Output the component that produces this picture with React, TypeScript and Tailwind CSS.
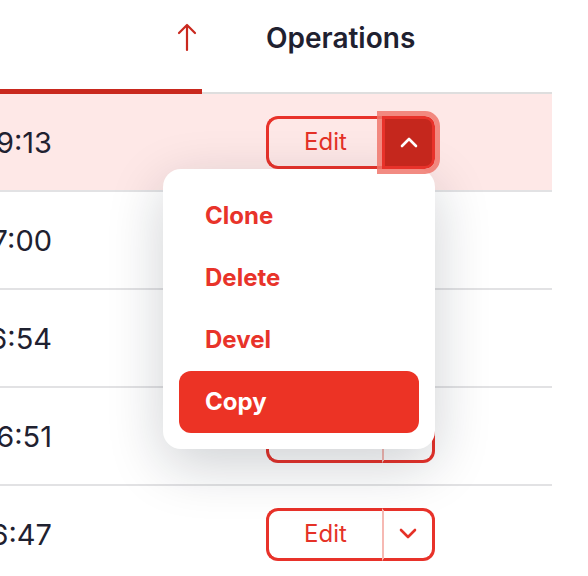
import React from "react";

// Table rows — the real page is scrolled sideways, so only the tail of the time is visible.
const rows = [
  { time: "2024-05-14 10:49:13", open: true },
  { time: "2024-05-14 10:47:00", open: false },
  { time: "2024-05-14 10:46:54", open: false },
  { time: "2024-05-14 10:46:51", open: false },
  { time: "2024-05-14 10:46:47", open: false },
];

const menuItems = ["Clone", "Delete", "Devel", "Copy"];

function ChevronIcon({ up, className }: { up?: boolean; className?: string }) {
  return (
    <svg width="20" height="12" viewBox="0 0 20 12" fill="none" className={className} aria-hidden="true">
      <path
        d={up ? "M3 10 L10 3 L17 10" : "M3 2 L10 9 L17 2"}
        stroke="currentColor"
        strokeWidth="2.6"
        strokeLinecap="round"
        strokeLinejoin="round"
      />
    </svg>
  );
}

function SortArrow() {
  return (
    <svg width="22" height="30" viewBox="0 0 22 30" fill="none" aria-hidden="true">
      <path d="M11 3 V28 M3 11 L11 3 L19 11" stroke="#c9281e" strokeWidth="2.2" strokeLinecap="round" strokeLinejoin="round" />
    </svg>
  );
}

function SplitButton({ open }: { open: boolean }) {
  return (
    <div className="relative flex h-[53px] w-[169px]">
      <button className="flex h-full w-[116px] items-center justify-center rounded-l-[12px] border-[3px] border-r-0 border-[#e8322a] text-[24px] text-[#e53127]">
        Edit
      </button>
      {open ? (
        <button className="relative z-20 flex h-full flex-1 items-center justify-center rounded-r-[10px] border-[3px] border-[#e8322a] bg-[#c5271d] text-white outline-[5px] outline-solid outline-[#f0776c]/85">
          <ChevronIcon up />
        </button>
      ) : (
        <button className="flex h-full flex-1 items-center justify-center rounded-r-[12px] border-[3px] border-l-2 border-[#e8322a] border-l-[#f6b9b3] text-[#e53127]">
          <ChevronIcon />
        </button>
      )}

      {open && (
        <div className="absolute right-0 top-full z-10 w-[272px] rounded-[18px] bg-white px-4 pt-4 pb-4 shadow-[0_16px_56px_rgba(15,23,42,0.2)]">
          {menuItems.map((item) => (
            <div
              key={item}
              className={
                item === "Copy"
                  ? "flex h-[62px] items-center rounded-[12px] bg-[#ec3325] pl-[26px] text-[24px] font-bold text-white"
                  : "flex h-[62px] items-center pl-[26px] text-[24px] font-bold text-[#e8332a]"
              }
            >
              {item}
            </div>
          ))}
        </div>
      )}
    </div>
  );
}

export default function App() {
  return (
    <div className="h-[576px] w-[588px] overflow-hidden bg-white font-['Inter',sans-serif] text-[#1f2130]">
      <div className="w-[552px]">
        {/* Header */}
        <div className="flex h-[94px]">
          <div className="flex w-[202px] justify-end border-b-[5px] border-[#c9281e] pt-[22px] pr-[4px]">
            <SortArrow />
          </div>
          <div className="flex-1 border-b-2 border-[#dedede] pt-[21px] pl-[64px]">
            <span className="text-[28px] font-semibold leading-[34px] text-[#1f2130]">Operations</span>
          </div>
        </div>

        {/* Rows */}
        {rows.map((row) => (
          <div
            key={row.time}
            className={
              row.open
                ? "relative z-10 flex h-[98px] items-center border-b-2 border-[#e2e2e4] bg-[#fee8e7]"
                : "flex h-[98px] items-center border-b-2 border-[#e2e2e4]"
            }
          >
            <div className="flex w-[202px] justify-end overflow-hidden pt-[2px] pr-[150px]">
              <span className="shrink-0 whitespace-nowrap text-[29px]">{row.time}</span>
            </div>
            <div className="flex-1 pl-[64px]">
              <SplitButton open={row.open} />
            </div>
          </div>
        ))}
      </div>
    </div>
  );
}
